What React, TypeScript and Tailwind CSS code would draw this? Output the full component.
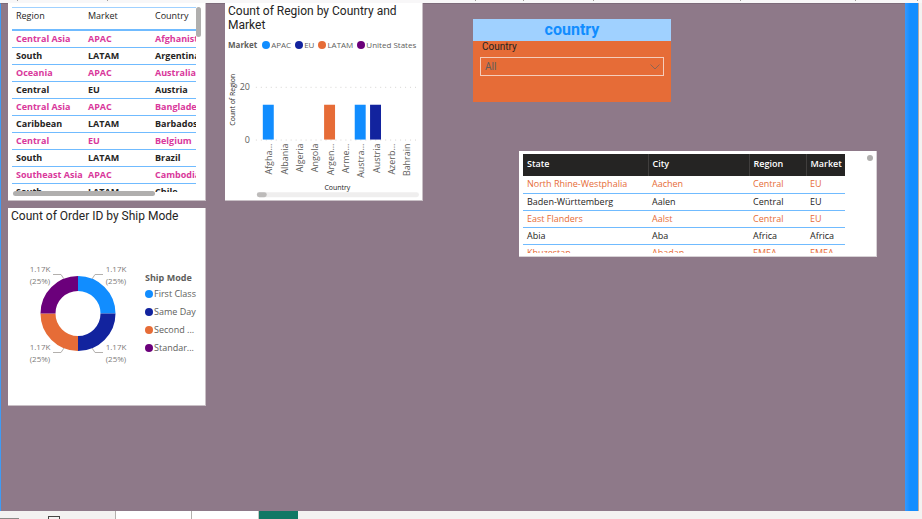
import React from "react";

const UI = "font-['Open_Sans','Noto_Sans',sans-serif]";
const DIN = "font-['Roboto','Liberation_Sans',sans-serif]";

const regionRows = [
  ["Central Asia", "APAC", "Afghanistan"],
  ["South", "LATAM", "Argentina"],
  ["Oceania", "APAC", "Australia"],
  ["Central", "EU", "Austria"],
  ["Central Asia", "APAC", "Bangladesh"],
  ["Caribbean", "LATAM", "Barbados"],
  ["Central", "EU", "Belgium"],
  ["South", "LATAM", "Brazil"],
  ["Southeast Asia", "APAC", "Cambodia"],
  ["South", "LATAM", "Chile"],
];

const cityRows = [
  ["North Rhine-Westphalia", "Aachen", "Central", "EU"],
  ["Baden-Württemberg", "Aalen", "Central", "EU"],
  ["East Flanders", "Aalst", "Central", "EU"],
  ["Abia", "Aba", "Africa", "Africa"],
  ["Khuzestan", "Abadan", "EMEA", "EMEA"],
];

const markets = [
  { name: "APAC", dot: "bg-[#118dff]" },
  { name: "EU", dot: "bg-[#12239e]" },
  { name: "LATAM", dot: "bg-[#e66c37]" },
  { name: "United States", dot: "bg-[#6b007b]" },
];

const shipModes = [
  { name: "First Class", dot: "bg-[#118dff]" },
  { name: "Same Day", dot: "bg-[#12239e]" },
  { name: "Second ...", dot: "bg-[#e66c37]" },
  { name: "Standar...", dot: "bg-[#6b007b]" },
];

const countries = [
  { name: "Afgha...", color: "#118dff" },
  { name: "Albania" },
  { name: "Algeria" },
  { name: "Angola" },
  { name: "Argen...", color: "#e66c37" },
  { name: "Arme..." },
  { name: "Austra...", color: "#118dff" },
  { name: "Austria", color: "#12239e" },
  { name: "Azerb..." },
  { name: "Bahrain" },
];

// Relative widths of the ribbon groups; each one ends in a small divider mark.
const ribbonGroups = [17, 90, 370, 48, 69, 147, 115, 62];

function RegionTable() {
  return (
    <section className="relative h-[198px] overflow-hidden border-r border-b border-[#c9c0c6] bg-white pt-1 pr-[9px] pl-1">
      <div className="h-[185px] overflow-hidden border-t border-[#a0d1ff]">
        <table className={`w-full min-w-[220px] table-fixed border-collapse text-[9px] leading-3 whitespace-nowrap text-[#252423] ${UI}`}>
          <colgroup>
            <col className="w-[72px]" />
            <col className="w-[67px]" />
            <col />
          </colgroup>
          <thead>
            <tr className="h-[22px] border-b-2 border-[#70bbff] text-left">
              {["Region", "Market", "Country"].map((h) => (
                <th key={h} className="px-1 pt-0 pb-[6px] font-normal">{h}</th>
              ))}
            </tr>
          </thead>
          <tbody>
            {regionRows.map((row, i) => (
              <tr key={i} className={`h-[17px] border-b border-[#70bbff] font-bold ${i % 2 ? "text-[#252423]" : "text-[#d9389b]"}`}>
                {row.map((c, j) => (
                  <td key={j} className="p-0 pl-1">{c}</td>
                ))}
              </tr>
            ))}
          </tbody>
        </table>
      </div>
      <div className="absolute top-1 right-1 h-[30px] w-[5px] rounded-full bg-[#b0afae]" />
      <div className="absolute bottom-1 left-[5px] h-[5px] w-[142px] rounded-full bg-[#b0afae]" />
    </section>
  );
}

function RegionChart() {
  return (
    <section className="h-[198px] overflow-hidden border-r border-b border-[#c9c0c6] bg-white">
      <h2 className={`px-[3px] pt-px text-[12px] leading-[14px] text-[#252423] ${DIN}`}>
        Count of Region by Country and Market
      </h2>
      <div className={`mt-1 flex h-[18px] items-center gap-1 pl-[3px] text-[8px] whitespace-nowrap text-[#605e5c] ${UI}`}>
        <span className="mr-px font-bold">Market</span>
        {markets.map((m) => (
          <span key={m.name} className="flex items-center gap-px">
            <i className={`size-2 rounded-full ${m.dot}`} />
            {m.name}
          </span>
        ))}
      </div>
      <svg viewBox="0 2 198 146" className={`block w-full ${UI}`} fill="#605e5c">
        <g stroke="#d6d4d2" strokeDasharray="1 4">
          <path d="M31 35.500H195M31 88.500H195" />
        </g>
        <g fontSize="9" textAnchor="end">
          <text x="25" y="38">20</text>
          <text x="25" y="91">0</text>
        </g>
        <text transform="translate(10 48) rotate(-90)" fontSize="7" textAnchor="middle" fill="#252423">Count of Region</text>
        {countries.map((c, i) => {
          const x = 43.5 + i * 15.4;
          return (
            <g key={c.name}>
              {c.color && <rect x={x - 5.5} y="53" width="11" height="35" fill={c.color} />}
              <text transform={`translate(${x + 4} 92) rotate(-90)`} fontSize="9" textAnchor="end">{c.name}</text>
            </g>
          );
        })}
        <text x="113" y="139" fontSize="7" textAnchor="middle" fill="#252423">Country</text>
        <rect x="32" y="141" width="163" height="5" rx="2.500" fill="#efeeee" />
        <rect x="32" y="141" width="10" height="5" rx="2.500" fill="#bdbbba" />
      </svg>
    </section>
  );
}

function ShipModeChart() {
  const labels = [
    { x: 32, y: 64 },
    { x: 108, y: 64 },
    { x: 32, y: 142 },
    { x: 108, y: 142 },
  ];
  return (
    <section className="h-[198px] border-r border-b border-[#c9c0c6] bg-white">
      <h2 className={`px-[3px] pt-px text-[12px] leading-[14px] whitespace-nowrap text-[#252423] ${DIN}`}>
        Count of Order ID by Ship Mode
      </h2>
      <div className={`flex ${UI}`}>
        <svg viewBox="0 15 137 170" className="block w-[137px] shrink-0">
          <g fill="none" strokeWidth="15">
            <path d="M70 75.500A30 30 0 0 1 100 105.500" stroke="#118dff" />
            <path d="M100 105.500A30 30 0 0 1 70 135.500" stroke="#12239e" />
            <path d="M70 135.500A30 30 0 0 1 40 105.500" stroke="#e66c37" />
            <path d="M40 105.500A30 30 0 0 1 70 75.500" stroke="#6b007b" />
          </g>
          <path d="M45 66.500H53L56 71M95 66.500H87L84 71M45 144.500H53L56 140M95 144.500H87L84 140" fill="none" stroke="#b3b0ad" />
          <g fontSize="8" textAnchor="middle" fill="#7d7b79">
            {labels.map((l, i) => (
              <text key={i} y={l.y}>
                <tspan x={l.x}>1.17K</tspan>
                <tspan x={l.x} dy="12">(25%)</tspan>
              </text>
            ))}
          </g>
        </svg>
        <div className="pt-[47px] text-[9px] whitespace-nowrap text-[#605e5c]">
          <h3 className="leading-[15px] font-bold">Ship Mode</h3>
          <ul>
            {shipModes.map((m) => (
              <li key={m.name} className="flex h-[18px] items-center gap-px">
                <i className={`size-2 rounded-full ${m.dot}`} />
                {m.name}
              </li>
            ))}
          </ul>
        </div>
      </div>
    </section>
  );
}

function CountrySlicer() {
  return (
    <section className={`h-[83px] max-w-[198px] bg-[#e66c37] ${DIN}`}>
      <h2 className="h-[22px] bg-[#a0d1ff] text-center text-[16px] leading-[21px] font-bold text-[#118dff]">country</h2>
      <div className="px-[7px]">
        <label htmlFor="country" className="block h-4 pl-[2px] text-[10px] leading-3 text-[#252423]">Country</label>
        <div className="relative">
          <select id="country" className="block h-[19px] w-full appearance-none border border-[#f5cdbb] bg-transparent px-1 text-[10px] text-[#605e5c]">
            <option>All</option>
          </select>
          <svg viewBox="0 0 10 6" className="pointer-events-none absolute top-[7px] right-1 h-[6px] w-[10px]" fill="none" stroke="#8d6553">
            <path d="M.5.500L5 5L9.500.500" />
          </svg>
        </div>
      </div>
    </section>
  );
}

function CityTable() {
  return (
    <section className="relative h-[106px] overflow-hidden border-r border-b border-[#d8d2d6] bg-white pt-[3px] pr-[31px] pl-1">
      <div className="h-[99px] overflow-hidden">
        <table className={`w-full table-fixed border-collapse text-[9px] leading-3 whitespace-nowrap text-[#252423] ${UI}`}>
          <colgroup>
            <col className="w-[125px]" />
            <col className="w-[101px]" />
            <col className="w-[57px]" />
            <col />
          </colgroup>
          <thead>
            <tr className="h-[22px] bg-[#252423] text-left text-white">
              {["State", "City", "Region", "Market"].map((h) => (
                <th key={h} className="border-r border-[#403e3d] p-0 pb-[3px] pl-1 font-semibold last:border-r-0">{h}</th>
              ))}
            </tr>
          </thead>
          <tbody>
            {cityRows.map((row, i) => (
              <tr key={i} className={`h-[17px] border-b border-[#70bbff] ${i % 2 ? "text-[#252423]" : "text-[#e66c37]"}`}>
                {row.map((c, j) => (
                  <td key={j} className="p-0 pl-1">{c}</td>
                ))}
              </tr>
            ))}
          </tbody>
        </table>
      </div>
      <div className="absolute top-1 right-[3px] size-[6px] rounded-full bg-[#b0afae]" />
    </section>
  );
}

export default function App() {
  return (
    <div className="flex h-screen flex-col overflow-hidden bg-[#f3f2f1]">
      <header className="flex h-[3px] shrink-0 items-start bg-[#f8f7f8] pr-1">
        {ribbonGroups.map((w, i) => (
          <i key={i} className="h-px basis-0 border-r border-[#a19f9d]" style={{ flexGrow: w }} />
        ))}
      </header>
      <div className="flex min-h-0 flex-1">
        <main className="min-w-0 flex-1 border-t border-l border-t-[#7d6b7a] border-l-[#3f9bf5] bg-[#8e7989]">
          <div className="-mt-px grid grid-cols-[minmax(0,198fr)_minmax(0,198fr)_minmax(0,435fr)] items-start gap-[19px] pr-7 pl-[7px]">
            <div className="flex min-w-0 flex-col gap-[7px]">
              <RegionTable />
              <ShipModeChart />
            </div>
            <RegionChart />
            <div className="pt-4 pl-[31px]">
              <CountrySlicer />
              <div className="mt-[49px] pl-[46px]">
                <CityTable />
              </div>
            </div>
          </div>
        </main>
        <aside className="mr-[3px] w-[14px] border-r border-[#b3aaa5] bg-linear-to-r from-[#3399ff] to-[#118dff] to-40%" />
      </div>
      <footer className="flex h-2 shrink-0 items-end">
        <div className="flex w-[115px] items-end gap-[29px]">
          <i className="h-px w-[19px] bg-[#8a8886]" />
          <i className="h-[3px] w-3 border border-b-0 border-[#484644]" />
        </div>
        <div className="h-full w-[77px] border-x border-[#b3b0ad] bg-white" />
        <div className="h-full w-[67px] border-r border-[#c8c6c4] bg-white" />
        <div className="h-full w-[39px] bg-[#117865]" />
      </footer>
    </div>
  );
}
